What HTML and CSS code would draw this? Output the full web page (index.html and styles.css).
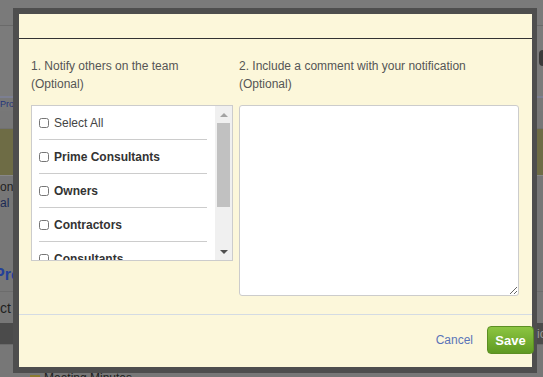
FILE: index.html
```html
<!DOCTYPE html>
<html lang="en">
<head>
    <meta charset="UTF-8">
    <title>Notify Team</title>
    <link rel="stylesheet" href="styles.css">
</head>
<body>
    <div class="page">
        <div class="band top"></div>
        <div class="band head"><span class="pill"></span></div>
        <div class="band tabs"><span class="proj">Proj</span></div>
        <div class="band plain"></div>
        <div class="band olive"></div>
        <div class="band text"><span>on</span><span class="link">al c</span></div>
        <div class="band title"><span>Pro</span></div>
        <div class="band sub"><span>ct</span></div>
        <div class="band dark"><span class="right">io</span></div>
        <div class="band rows"><span class="folder"></span>Meeting Minutes</div>
    </div>

    <div class="dialog">
        <div class="dialog-head"></div>
        <div class="dialog-body">
            <div class="col col-left">
                <label class="step">1. Notify others on the team (Optional)</label>
                <div class="listbox">
                    <ul class="list">
                        <li><input type="checkbox"> <span>Select All</span></li>
                        <li class="strong"><input type="checkbox"> <span>Prime Consultants</span></li>
                        <li class="strong"><input type="checkbox"> <span>Owners</span></li>
                        <li class="strong"><input type="checkbox"> <span>Contractors</span></li>
                        <li class="strong"><input type="checkbox"> <span>Consultants</span></li>
                    </ul>
                    <div class="scrollbar">
                        <span class="arrow up"></span>
                        <span class="thumb"></span>
                        <span class="arrow down"></span>
                    </div>
                </div>
            </div>
            <div class="col col-right">
                <label class="step">2. Include a comment with your notification (Optional)</label>
                <textarea class="comment"></textarea>
            </div>
        </div>
        <div class="dialog-foot">
            <a href="#" class="cancel">Cancel</a>
            <button class="save">Save</button>
        </div>
    </div>
</body>
</html>
```

FILE: styles.css
```css
body {
    margin: 0;
    font-family: "Liberation Sans", Arial, sans-serif;
    background: #777;
    overflow: hidden;
}
.page {
    width: 543px;
    height: 377px;
    position: relative;
    overflow: hidden;
}
.band {
    position: relative;
    font-size: 12px;
    color: #1f1f1f;
}
.top {
    height: 25px;
    background: #7a7a7a;
    border-bottom: 1px solid #6a6a6a;
}
.head {
    height: 70px;
    background: #7b7b7b;
}
.pill {
    position: absolute;
    right: -6px;
    top: 24px;
    width: 10px;
    height: 16px;
    border-radius: 4px;
    background: #3a3a3a;
}
.tabs {
    height: 13px;
    border-top: 2px solid #7c7f92;
    background: #787878;
    font-size: 9px;
    color: #25357a;
}
.proj {
    position: absolute;
    top: 1px;
}
.plain {
    height: 17px;
    background: #777;
    border-bottom: 1px solid #707070;
}
.olive {
    height: 46px;
    background: #6e6c45;
}
.text {
    height: 78px;
    background: #777;
    border-top: 1px solid #888;
}
.text span {
    position: absolute;
    left: 0;
    top: 4px;
}
.text .link {
    top: 20px;
    color: #1c2a55;
}
.title {
    height: 37px;
    border-bottom: 1px solid #6c6c6c;
    background: #777;
}
.title span {
    position: absolute;
    left: -6px;
    top: 12px;
    font-size: 16px;
    font-weight: bold;
    color: #23409a;
}
.sub {
    height: 31px;
    background: #777;
}
.sub span {
    position: absolute;
    left: 0;
    top: 8px;
    font-size: 14px;
}
.dark {
    height: 21px;
    background: #4b4b4b;
}
.dark .right {
    position: absolute;
    left: 537px;
    top: 4px;
    color: #9a9a9a;
}
.rows {
    box-sizing: border-box;
    height: 33px;
    overflow: hidden;
    background: #777;
    border-top: 1px solid #6a6a6a;
    padding-left: 30px;
    padding-top: 26px;
}
.folder {
    display: inline-block;
    width: 10px;
    height: 7px;
    margin-right: 4px;
    background: #8a7a30;
}

.dialog {
    position: absolute;
    left: 13px;
    top: 8px;
    width: 513px;
    height: 353px;
    border: 6px solid #4e4e4e;
    border-right-width: 5px;
    background: #fcf7da;
    display: flex;
    flex-direction: column;
}
.dialog-head {
    height: 24px;
    border-bottom: 1px solid #333;
}
.dialog-body {
    display: flex;
    gap: 6px;
    padding: 18px 13px 18px 12px;
    border-bottom: 1px solid #d4dbe3;
}
.col-left {
    width: 202px;
}
.col-right {
    flex: 1;
}
.step {
    display: block;
    font-size: 12px;
    line-height: 18px;
    color: #555;
    height: 36px;
    margin-bottom: 12px;
}
.col-left .step {
    width: 160px;
}
.col-right .step {
    width: 240px;
}
.listbox {
    display: flex;
    height: 154px;
    border: 1px solid #ccc;
    background: #fff;
    overflow: hidden;
}
.list {
    flex: 1;
    list-style: none;
    margin: 0;
    padding: 0 8px 0 7px;
}
.list li {
    display: flex;
    align-items: center;
    height: 33px;
    border-bottom: 1px solid #ccc;
    font-size: 12px;
    color: #444;
}
.list li.strong {
    font-weight: bold;
    color: #333;
}
.list input {
    width: 10px;
    height: 10px;
    margin: 0 5px 0 0;
}
.scrollbar {
    width: 17px;
    background: #f0f0f0;
    display: flex;
    flex-direction: column;
    align-items: center;
}
.arrow {
    width: 0;
    height: 0;
    border-left: 4px solid transparent;
    border-right: 4px solid transparent;
}
.arrow.up {
    margin-top: 7px;
    border-bottom: 4px solid #a3a3a3;
}
.arrow.down {
    margin-top: auto;
    margin-bottom: 6px;
    border-top: 4px solid #505050;
}
.thumb {
    width: 13px;
    height: 84px;
    margin-top: 6px;
    background: #c1c1c1;
}
.comment {
    display: block;
    box-sizing: border-box;
    width: 280px;
    height: 191px;
    margin: 0;
    border: 1px solid #ccc;
    border-radius: 3px;
    background: #fff;
    resize: both;
}
.dialog-foot {
    flex: 1;
    display: flex;
    justify-content: flex-end;
    align-items: center;
    gap: 14px;
    padding-bottom: 2px;
}
.cancel {
    font-size: 12px;
    color: #5a74b8;
    text-decoration: none;
}
.save {
    width: 47px;
    height: 28px;
    margin-right: -2px;
    border: 1px solid #5c8f23;
    border-radius: 4px;
    background: linear-gradient(#8cc541, #5f9a22);
    color: #fff;
    font-family: "Liberation Sans", Arial, sans-serif;
    font-size: 13px;
    font-weight: bold;
    padding: 0;
}
```
